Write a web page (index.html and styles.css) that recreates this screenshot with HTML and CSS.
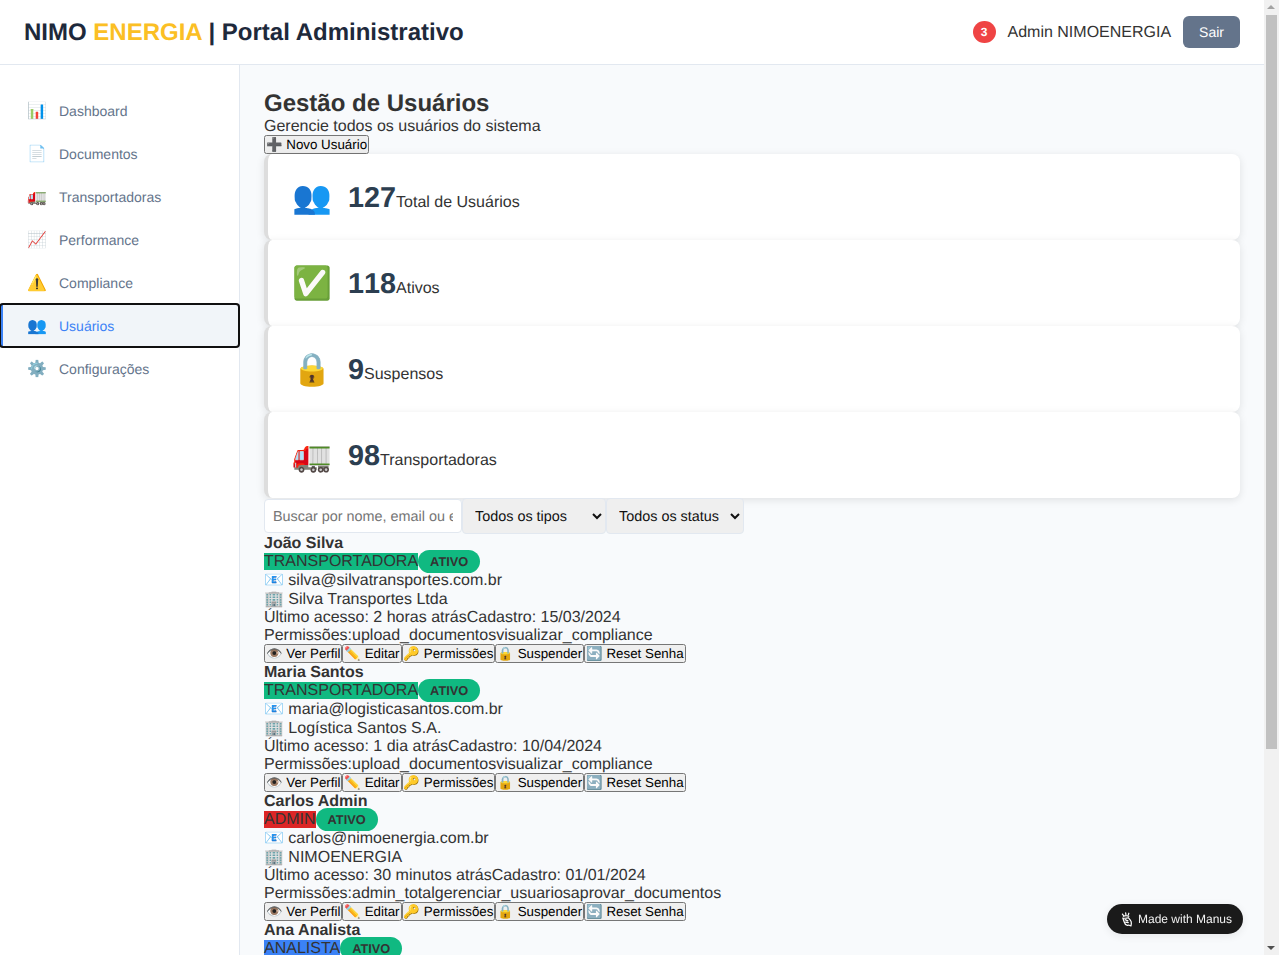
FILE: index.html
```html
<!DOCTYPE html>
<html lang="pt-BR">
<head>
<meta charset="UTF-8" />
<meta name="viewport" content="width=device-width, initial-scale=1" />
<title>Gestão de Usuários - NIMO ENERGIA</title>
<link rel="stylesheet" href="styles.css">
</head>
<body>

<header class="top-bar">
  <h1 class="logo">NIMO <span class="logo-accent">ENERGIA</span> | Portal Administrativo</h1>
  <div class="user-area">
    <span class="notif-badge">3</span>
    <span class="user-name">Admin NIMOENERGIA</span>
    <button class="btn-logout">Sair</button>
  </div>
</header>

<div class="layout">
  <nav class="sidebar">
    <a class="nav-item" href="#"><span class="nav-icon">📊</span>Dashboard</a>
    <a class="nav-item" href="#"><span class="nav-icon">📄</span>Documentos</a>
    <a class="nav-item" href="#"><span class="nav-icon">🚛</span>Transportadoras</a>
    <a class="nav-item" href="#"><span class="nav-icon">📈</span>Performance</a>
    <a class="nav-item" href="#"><span class="nav-icon">⚠️</span>Compliance</a>
    <a class="nav-item active" href="#"><span class="nav-icon">👥</span>Usuários</a>
    <a class="nav-item" href="#"><span class="nav-icon">⚙️</span>Configurações</a>
  </nav>

  <main class="content">
    <div class="page-head">
      <h2 class="page-title">Gestão de Usuários</h2>
      <p class="row">Gerencie todos os usuários do sistema</p>
      <button class="btn">➕ Novo Usuário</button>
    </div>

    <section class="stats">
      <div class="stat-card">
        <div class="stat-icon">👥</div>
        <div class="stat-info"><span class="stat-number">127</span><span>Total de Usuários</span></div>
      </div>
      <div class="stat-card">
        <div class="stat-icon">✅</div>
        <div class="stat-info"><span class="stat-number">118</span><span>Ativos</span></div>
      </div>
      <div class="stat-card">
        <div class="stat-icon">🔒</div>
        <div class="stat-info"><span class="stat-number">9</span><span>Suspensos</span></div>
      </div>
      <div class="stat-card">
        <div class="stat-icon">🚛</div>
        <div class="stat-info"><span class="stat-number">98</span><span>Transportadoras</span></div>
      </div>
    </section>

    <section class="filters">
      <input class="search-input" type="text" placeholder="Buscar por nome, email ou empresa..." />
      <select class="filter-select">
        <option>Todos os tipos</option>
        <option>Transportadoras</option>
        <option>Administradores</option>
        <option>Analistas</option>
      </select>
      <select class="filter-select">
        <option>Todos os status</option>
        <option>Ativo</option>
        <option>Suspenso</option>
      </select>
    </section>

    <section class="users">
      <article>
        <h3 class="user-title row">João Silva</h3>
        <div class="row"><span class="role role-transp">TRANSPORTADORA</span><span class="status">ATIVO</span></div>
        <div class="row row-icon">📧 silva@silvatransportes.com.br</div>
        <div class="row row-icon">🏢 Silva Transportes Ltda</div>
        <div class="row"><span>Último acesso: 2 horas atrás</span><span>Cadastro: 15/03/2024</span></div>
        <div class="row"><span>Permissões:</span><span>upload_documentos</span><span>visualizar_compliance</span></div>
        <div class="actions"><button class="btn">👁️ Ver Perfil</button><button class="btn">✏️ Editar</button><button class="btn">🔑 Permissões</button><button class="btn">🔒 Suspender</button><button class="btn">🔄 Reset Senha</button></div>
      </article>
      <article>
        <h3 class="user-title row">Maria Santos</h3>
        <div class="row"><span class="role role-transp">TRANSPORTADORA</span><span class="status">ATIVO</span></div>
        <div class="row row-icon">📧 maria@logisticasantos.com.br</div>
        <div class="row row-icon">🏢 Logística Santos S.A.</div>
        <div class="row"><span>Último acesso: 1 dia atrás</span><span>Cadastro: 10/04/2024</span></div>
        <div class="row"><span>Permissões:</span><span>upload_documentos</span><span>visualizar_compliance</span></div>
        <div class="actions"><button class="btn">👁️ Ver Perfil</button><button class="btn">✏️ Editar</button><button class="btn">🔑 Permissões</button><button class="btn">🔒 Suspender</button><button class="btn">🔄 Reset Senha</button></div>
      </article>
      <article>
        <h3 class="user-title row">Carlos Admin</h3>
        <div class="row"><span class="role role-admin">ADMIN</span><span class="status">ATIVO</span></div>
        <div class="row row-icon">📧 carlos@nimoenergia.com.br</div>
        <div class="row row-icon">🏢 NIMOENERGIA</div>
        <div class="row"><span>Último acesso: 30 minutos atrás</span><span>Cadastro: 01/01/2024</span></div>
        <div class="row"><span>Permissões:</span><span>admin_total</span><span>gerenciar_usuarios</span><span>aprovar_documentos</span></div>
        <div class="actions"><button class="btn">👁️ Ver Perfil</button><button class="btn">✏️ Editar</button><button class="btn">🔑 Permissões</button><button class="btn">🔒 Suspender</button><button class="btn">🔄 Reset Senha</button></div>
      </article>
      <article>
        <h3 class="user-title row">Ana Analista</h3>
        <div class="row"><span class="role role-analista">ANALISTA</span><span class="status">ATIVO</span></div>
        <div class="row row-icon">📧 ana@nimoenergia.com.br</div>
        <div class="row row-icon">🏢 NIMOENERGIA</div>
        <div class="row"><span>Último acesso: 1 hora atrás</span><span>Cadastro: 15/02/2024</span></div>
        <div class="row"><span>Permissões:</span><span>aprovar_documentos</span><span>visualizar_compliance</span></div>
        <div class="actions"><button class="btn">👁️ Ver Perfil</button><button class="btn">✏️ Editar</button><button class="btn">🔑 Permissões</button><button class="btn">🔒 Suspender</button><button class="btn">🔄 Reset Senha</button></div>
      </article>
      <article>
        <h3 class="user-title row">Pedro Costa</h3>
        <div class="row"><span class="role role-transp">TRANSPORTADORA</span><span class="status">ATIVO</span></div>
        <div class="row row-icon">📧 pedro@costalog.com.br</div>
        <div class="row row-icon">🏢 Costa Logística</div>
        <div class="row"><span>Último acesso: 3 dias atrás</span><span>Cadastro: 20/05/2024</span></div>
        <div class="row"><span>Permissões:</span><span>upload_documentos</span></div>
        <div class="actions"><button class="btn">👁️ Ver Perfil</button><button class="btn">✏️ Editar</button><button class="btn">🔑 Permissões</button><button class="btn">🔒 Suspender</button><button class="btn">🔄 Reset Senha</button></div>
      </article>
    </section>
  </main>
</div>

<div class="manus-badge">
  <svg class="manus-icon" viewBox="0 0 16 16" fill="none" stroke="#fff" stroke-width="1.3" stroke-linecap="round" stroke-linejoin="round">
    <path d="M2.6 2.2l1 1.4M6 .9l.3 1.8M9.4 1.3l-.5 1.6M3.6 4.6c1.8-.9 4-.9 5.8 0"/>
    <path d="M3 6.4c1.8.4 4 .3 5.8-.3l2 2.4c1 1.2 1.5 2.3 1.3 3.6l-.4 2.8-2.5-1-1.3.3C6.4 13.8 4.8 12.2 4.4 10.4L3 6.4z"/>
    <path d="M5.4 8.2l3 1.2M6 10.8l2.8.6"/>
  </svg>
  Made with Manus
</div>

<div class="scroll-rail">
  <span class="scroll-arrow arrow-up"></span>
  <div class="scroll-track"><div class="scroll-thumb"></div></div>
  <span class="scroll-arrow arrow-down"></span>
</div>

</body>
</html>
```

FILE: styles.css
```css
* {
  margin: 0;
  padding: 0;
  box-sizing: border-box;
}
body {
  font-family: 'Liberation Sans', Arial, sans-serif;
  background: #f8fafc;
  color: #333;
  padding-right: 15px;
  text-rendering: geometricPrecision;
}
button, input, select {
  text-rendering: geometricPrecision;
}
.top-bar {
  background: white;
  border-bottom: 1px solid #e2e8f0;
  padding: 16px 24px;
  height: 65px;
  display: flex;
  justify-content: space-between;
  align-items: center;
}
.logo {
  font-size: 24px;
  line-height: 28px;
  padding-top: 1px;
  font-weight: 700;
  color: #1e293b;
}
.logo-accent {
  color: #fbbf24;
}
.user-area {
  display: flex;
  align-items: center;
  gap: 12px;
}
.notif-badge {
  background: #ef4444;
  color: white;
  font-size: 12px;
  font-weight: 700;
  padding: 4px 8px;
  border-radius: 50%;
}
.user-name {
  padding-top: 1px;
}
.btn-logout {
  background: #64748b;
  color: white;
  border: none;
  border-radius: 6px;
  padding: 8px 16px;
  font-size: 14px;
  font-family: inherit;
  height: 32px;
}
.layout {
  display: flex;
}
.sidebar {
  width: 240px;
  flex-shrink: 0;
  background: white;
  border-right: 1px solid #e2e8f0;
  padding-top: 24px;
}
.nav-item {
  display: flex;
  align-items: center;
  height: 43px;
  padding-left: 24px;
  border-left: 3px solid transparent;
  color: #64748b;
  font-size: 14px;
  text-decoration: none;
}
.nav-icon {
  width: 20px;
  margin-right: 12px;
  font-size: 16px;
  text-align: center;
}
.nav-item.active {
  background: #f1f5f9;
  color: #3b82f6;
  border-left-color: #3b82f6;
  border-radius: 3px;
  outline: 2px solid #101010;
  outline-offset: -1px;
}
.content {
  flex: 1;
  min-width: 0;
  padding: 24px;
}
.page-title {
  font-size: 24px;
  height: 28px;
  line-height: 30px;
  font-weight: 700;
}
.row {
  height: 18px;
  line-height: 20px;
}
.row-icon {
  height: 19px;
  line-height: 21px;
}
.btn {
  display: block;
  height: 19px;
}
.actions {
  display: flex;
  height: 19px;
}
.stat-card {
  height: 86px;
  background: white;
  border-left: 4px solid #ddd;
  border-radius: 8px;
  box-shadow: 0 2px 8px rgba(0, 0, 0, 0.1);
  padding: 24px;
  display: flex;
  align-items: center;
  gap: 16px;
}
.stat-icon {
  font-size: 32px;
  width: 40px;
  text-align: center;
}
.stat-info {
  padding-top: 2px;
}
.stat-number {
  font-size: 28.8px;
  font-weight: 700;
  color: #2c3e50;
  font-kerning: none;
}
.filters {
  display: flex;
  align-items: center;
  height: 36px;
}
.search-input {
  width: 198px;
  padding: 9px 8px 7px;
  border: 1px solid #e2e8f0;
  border-radius: 4px;
  font-size: 14.4px;
  font-family: inherit;
  background: white;
}
.filter-select {
  padding: 9px 8px 7px;
  border: 1px solid #e2e8f0;
  border-radius: 4px;
  font-size: 14.4px;
  font-family: inherit;
  background: #efefef;
  color: #111;
}
.user-title {
  font-size: 16px;
  font-weight: 700;
}
.role {
  font-size: 16px;
}
.role-transp {
  background: #10b981;
}
.role-admin {
  background: #dc2626;
}
.role-analista {
  background: #3b82f6;
}
.status {
  background: #10b981;
  font-size: 12.8px;
  font-weight: 700;
  padding: 4px 12px;
  border-radius: 12px;
}
.manus-badge {
  position: fixed;
  right: 36px;
  bottom: 21px;
  height: 30px;
  width: 136px;
  padding-left: 13px;
  background: #1a1a1a;
  color: #f2f2f2;
  border-radius: 15px;
  font-size: 12px;
  display: flex;
  align-items: center;
  gap: 3px;
  box-shadow: 0 2px 8px rgba(0, 0, 0, 0.08);
}
.manus-icon {
  width: 15px;
  height: 15px;
}
.scroll-rail {
  position: fixed;
  top: 0;
  right: 0;
  bottom: 0;
  width: 15px;
  background: #f1f1f1;
  display: flex;
  flex-direction: column;
}
.scroll-arrow {
  height: 15px;
  position: relative;
}
.scroll-arrow::after {
  content: "";
  position: absolute;
  left: 3px;
  border-left: 4px solid transparent;
  border-right: 4px solid transparent;
}
.arrow-up::after {
  top: 5px;
  border-bottom: 4px solid #a3a3a3;
}
.arrow-down::after {
  top: 6px;
  border-top: 4px solid #505050;
}
.scroll-track {
  flex: 1;
  padding: 0 2px;
}
.scroll-thumb {
  height: 734px;
  background: #c1c1c1;
}
```
